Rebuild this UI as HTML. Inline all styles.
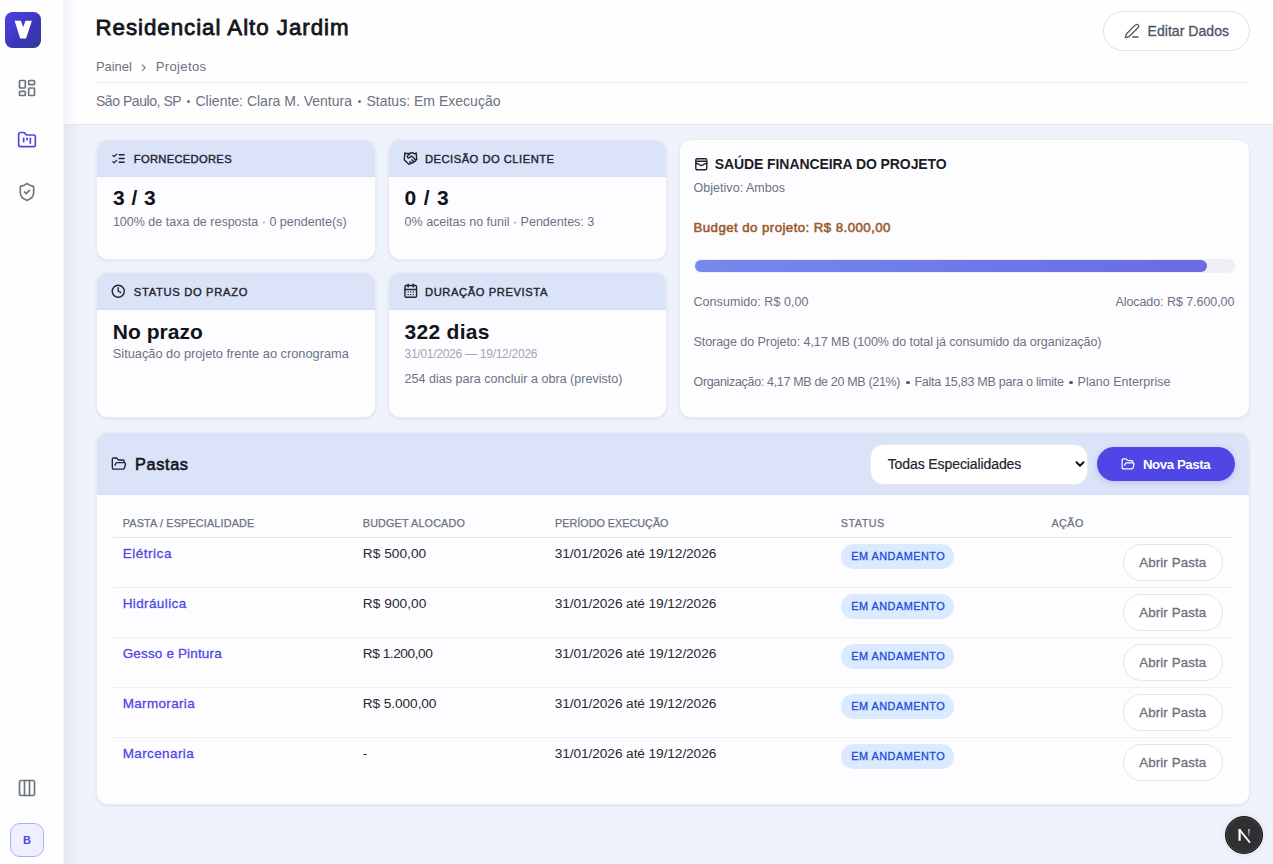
<!DOCTYPE html>
<html><head><meta charset="utf-8">
<style>
html,body{margin:0;padding:0;}
body{width:1273px;height:864px;overflow:hidden;position:relative;background:#eef2fb;font-family:"Liberation Sans",sans-serif;}
.a{position:absolute;box-sizing:border-box;}
.t{position:absolute;white-space:pre;line-height:1;}
svg{position:absolute;overflow:visible;}
.ic{fill:none;stroke-linecap:round;stroke-linejoin:round;}
.card{border:1px solid #eeebec;border-radius:12px;background:#fdfdff;overflow:hidden;box-shadow:0 1px 3px rgba(20,30,70,.05),0 1px 2px rgba(20,30,70,.03);}
.hd{position:absolute;left:0;top:0;width:100%;box-sizing:border-box;background:#dbe3f8;border-bottom:1px solid #d6def6;}
</style></head><body>
<!-- sidebar -->
<div class="a" style="left:0;top:0;width:64px;height:864px;background:#fefefe;border-right:1px solid #f2f2f4;"></div>
<div class="a" style="left:5.4px;top:12.2px;width:35.2px;height:35.6px;border-radius:7.5px;background:linear-gradient(135deg,#4d43e6 0%,#3b36b8 60%,#2f3a95 100%);"></div>
<svg style="left:0;top:0" width="64" height="64" viewBox="0 0 64 64"><path d="M14.6 20.8 H20.9 L23.2 27.2 L25.4 20.8 H31.9 L26 38.5 H20.2 Z" fill="#fff"/></svg>
<svg class="ic" style="left:17px;top:78px" width="20" height="20" viewBox="0 0 24 24" stroke="#6b7280" stroke-width="2"><rect width="7" height="9" x="3" y="3" rx="1"/><rect width="7" height="5" x="14" y="3" rx="1"/><rect width="7" height="9" x="14" y="12" rx="1"/><rect width="7" height="5" x="3" y="16" rx="1"/></svg>
<svg class="ic" style="left:17.2px;top:129.9px" width="20" height="20" viewBox="0 0 24 24" stroke="#4f46e5" stroke-width="2"><path d="M4 20h16a2 2 0 0 0 2-2V8a2 2 0 0 0-2-2h-7.93a2 2 0 0 1-1.66-.9l-.82-1.2A2 2 0 0 0 7.93 3H4a2 2 0 0 0-2 2v13c0 1.1.9 2 2 2Z"/><path d="M8 10v4"/><path d="M12 10v2"/><path d="M16 10v6"/></svg>
<svg class="ic" style="left:17px;top:182px" width="20" height="20" viewBox="0 0 24 24" stroke="#6b7280" stroke-width="2"><path d="M20 13c0 5-3.5 7.5-7.66 8.95a1 1 0 0 1-.67-.01C7.5 20.5 4 18 4 13V6a1 1 0 0 1 1-1c2 0 4.5-1.2 6.24-2.72a1.17 1.17 0 0 1 1.52 0C14.51 3.81 17 5 19 5a1 1 0 0 1 1 1z"/><path d="m9 12 2 2 4-4"/></svg>
<svg class="ic" style="left:17px;top:778px" width="20" height="20" viewBox="0 0 24 24" stroke="#6b7280" stroke-width="2"><rect width="18" height="18" x="3" y="3" rx="2"/><path d="M9 3v18"/><path d="M15 3v18"/></svg>
<div class="a" style="left:10px;top:823px;width:34px;height:34px;border-radius:10px;background:#eef1fd;border:1px solid #a9b1f5;"></div>
<div class="t" style="left:23px;top:835px;font-size:11px;font-weight:700;color:#4f46e5;">B</div>

<!-- header -->
<div class="a" style="left:64px;top:0;width:1209px;height:125px;background:#fefefe;border-bottom:1px solid #e6e7ea;"></div>
<div class="a" style="left:64px;top:0;width:14px;height:124px;background:linear-gradient(90deg,rgba(200,212,235,.22),rgba(200,212,235,0));"></div>
<div class="a" style="left:96px;top:82px;width:1153px;height:1px;background:#eceef2;"></div>
<svg class="ic" style="left:138.3px;top:61.7px" width="11.5" height="11.5" viewBox="0 0 24 24" stroke="#7b8290" stroke-width="2.4"><path d="m9 18 6-6-6-6"/></svg>
<div class="a" style="left:1103px;top:11px;width:147px;height:40px;border-radius:20px;background:#fff;border:1px solid #dfe2e7;"></div>
<svg class="ic" style="left:1123.8px;top:23.2px" width="16" height="16" viewBox="0 0 24 24" stroke="#4b5563" stroke-width="1.9"><path d="M13 21h8"/><path d="M21.174 6.812a1 1 0 0 0-3.986-3.987L3.842 16.174a2 2 0 0 0-.5.83l-1.321 4.352a.5.5 0 0 0 .623.622l4.353-1.32a2 2 0 0 0 .83-.497z"/></svg>

<div class="a" style="left:64px;top:125px;width:18px;height:739px;background:linear-gradient(90deg,rgba(150,160,185,.14),rgba(150,160,185,.05) 45%,rgba(150,160,185,0));"></div>
<!-- small cards -->
<div class="a card" style="left:96px;top:139px;width:280px;height:121px;"><div class="hd" style="height:37px;"></div></div>
<div class="a card" style="left:388px;top:139px;width:279px;height:121px;"><div class="hd" style="height:37px;"></div></div>
<div class="a card" style="left:96px;top:272px;width:280px;height:146px;"><div class="hd" style="height:37px;"></div></div>
<div class="a card" style="left:388px;top:272px;width:279px;height:146px;"><div class="hd" style="height:37px;"></div></div>
<!-- big card -->
<div class="a card" style="left:679px;top:139px;width:571px;height:279px;"></div>
<div class="a" style="left:694px;top:259px;width:541px;height:14px;border-radius:7px;background:#eef0f5;"></div>
<div class="a" style="left:695px;top:260px;width:512px;height:12px;border-radius:6px;background:linear-gradient(90deg,#7589ee,#6a6ae4);"></div>

<!-- card icons -->
<svg class="ic" style="left:111px;top:150.7px" width="15" height="15" viewBox="0 0 24 24" stroke="#1f2430" stroke-width="2.2"><path d="m3 17 2 2 4-4"/><path d="m3 7 2 2 4-4"/><path d="M13 6h8"/><path d="M13 12h8"/><path d="M13 18h8"/></svg>
<svg class="ic" style="left:403.3px;top:150.8px" width="15" height="15" viewBox="0 0 24 24" stroke="#1f2430" stroke-width="2.2"><path d="m11 17 2 2a1 1 0 1 0 3-3"/><path d="m14 14 2.5 2.5a1 1 0 1 0 3-3l-3.88-3.88a3 3 0 0 0-4.24 0l-.88.88a1 1 0 1 1-3-3l2.81-2.81a5.790 5.79 0 0 1 7.06-.87l.47.28a2 2 0 0 0 1.42.25L21 4"/><path d="m21 3 1 11h-2"/><path d="M3 3 2 14l6.5 6.5a1 1 0 1 0 3-3"/><path d="M3 4h8"/></svg>
<svg class="ic" style="left:111.2px;top:283.9px" width="14.5" height="14.5" viewBox="0 0 24 24" stroke="#1f2430" stroke-width="2.3"><circle cx="12" cy="12" r="10"/><path d="M12 6v6l4 2"/></svg>
<svg class="ic" style="left:402.7px;top:283.4px" width="15.5" height="15.5" viewBox="0 0 24 24" stroke="#1f2430" stroke-width="2.2"><path d="M8 2v4"/><path d="M16 2v4"/><rect width="18" height="18" x="3" y="4" rx="2"/><path d="M3 10h18"/><path d="M8 14h.01"/><path d="M12 14h.01"/><path d="M16 14h.01"/><path d="M8 18h.01"/><path d="M12 18h.01"/><path d="M16 18h.01"/></svg>
<svg class="ic" style="left:694px;top:156.8px" width="14.6" height="14.6" viewBox="0 0 24 24" stroke="#1f2430" stroke-width="2.3"><rect width="18" height="18" x="3" y="3" rx="2"/><path d="M3 9a2 2 0 0 1 2-2h14a2 2 0 0 1 2 2"/><path d="M3 11h3c.8 0 1.6.3 2.1.9l1.1.9c1.6 1.6 4.1 1.6 5.7 0l1.1-.9c.5-.5 1.3-.9 2.1-.9H21"/></svg>

<!-- pastas -->
<div class="a card" style="left:96px;top:432px;width:1154px;height:373px;"><div class="hd" style="height:62px;"></div></div>
<svg class="ic" style="left:111px;top:456.1px" width="15.8" height="15.8" viewBox="0 0 24 24" stroke="#1f2430" stroke-width="2.1"><path d="m6 14 1.5-2.900A2 2 0 0 1 9.24 10H20a2 2 0 0 1 1.94 2.5l-1.54 6a2 2 0 0 1-1.95 1.5H4a2 2 0 0 1-2-2V5a2 2 0 0 1 2-2h3.9a2 2 0 0 1 1.69.9l.81 1.2a2 2 0 0 0 1.67.9H18a2 2 0 0 1 2 2v2"/></svg>
<div class="a" style="left:869.5px;top:443.5px;width:218.5px;height:41px;border-radius:13px;background:#fff;border:1px solid #ebe8ea;"></div>
<svg class="ic" style="left:1072.8px;top:456.8px" width="14" height="14" viewBox="0 0 24 24" stroke="#111" stroke-width="3.3"><path d="m6 9 6 6 6-6"/></svg>
<div class="a" style="left:1097px;top:447px;width:138px;height:34px;border-radius:17px;background:#4f46e5;box-shadow:0 2px 6px rgba(79,70,229,.22);"></div>
<svg class="ic" style="left:1120.7px;top:456.7px" width="14.2" height="14.2" viewBox="0 0 24 24" stroke="#fff" stroke-width="2.1"><path d="m6 14 1.5-2.900A2 2 0 0 1 9.24 10H20a2 2 0 0 1 1.94 2.5l-1.54 6a2 2 0 0 1-1.950 1.5H4a2 2 0 0 1-2-2V5a2 2 0 0 1 2-2h3.9a2 2 0 0 1 1.69.9l.81 1.2a2 2 0 0 0 1.67.9H18a2 2 0 0 1 2 2v2"/></svg>

<!-- table lines -->
<div class="a" style="left:113px;top:537px;width:1120px;height:1px;background:#e4e6eb;"></div>
<div class="a" style="left:113px;top:587px;width:1120px;height:1px;background:#eef0f3;"></div>
<div class="a" style="left:113px;top:637px;width:1120px;height:1px;background:#eef0f3;"></div>
<div class="a" style="left:113px;top:687px;width:1120px;height:1px;background:#eef0f3;"></div>
<div class="a" style="left:113px;top:737px;width:1120px;height:1px;background:#eef0f3;"></div>
<!-- badges & buttons -->
<div class="a" style="left:841px;top:544px;width:113px;height:25px;border-radius:13px;background:#dbeafe;"></div>
<div class="a" style="left:841px;top:594px;width:113px;height:25px;border-radius:13px;background:#dbeafe;"></div>
<div class="a" style="left:841px;top:644px;width:113px;height:25px;border-radius:13px;background:#dbeafe;"></div>
<div class="a" style="left:841px;top:694px;width:113px;height:25px;border-radius:13px;background:#dbeafe;"></div>
<div class="a" style="left:841px;top:744px;width:113px;height:25px;border-radius:13px;background:#dbeafe;"></div>
<div class="a" style="left:1123px;top:544px;width:100px;height:37px;border-radius:19px;background:#fff;border:1px solid #e3e5ea;"></div>
<div class="a" style="left:1123px;top:594px;width:100px;height:37px;border-radius:19px;background:#fff;border:1px solid #e3e5ea;"></div>
<div class="a" style="left:1123px;top:644px;width:100px;height:37px;border-radius:19px;background:#fff;border:1px solid #e3e5ea;"></div>
<div class="a" style="left:1123px;top:694px;width:100px;height:37px;border-radius:19px;background:#fff;border:1px solid #e3e5ea;"></div>
<div class="a" style="left:1123px;top:744px;width:100px;height:37px;border-radius:19px;background:#fff;border:1px solid #e3e5ea;"></div>

<!-- next badge -->
<div class="a" style="left:1225px;top:816px;width:38px;height:38px;border-radius:19px;background:#303033;border:1px solid #161618;box-shadow:0 0 6px rgba(0,0,0,.08),inset 0 0 0 1px rgba(255,255,255,.1);"></div>
<svg style="left:1237.5px;top:829px" width="14" height="15" viewBox="0 0 14 15"><defs><linearGradient id="ng" gradientUnits="userSpaceOnUse" x1="0" y1="0" x2="0" y2="7.4"><stop offset="0" stop-color="#fff"/><stop offset="1" stop-color="#fff" stop-opacity="0.2"/></linearGradient></defs><path d="M1.6 0 V11.8" stroke="#fff" stroke-width="2.2" fill="none"/><path d="M1.2 0.4 L12 13.6" stroke="#fff" stroke-width="1.7" fill="none"/><path d="M10.9 0 V7.4" stroke="url(#ng)" stroke-width="1.2" fill="none"/></svg>

<div class="a" style="left:186.5px;top:99.5px;width:3.2px;height:3.2px;border-radius:2px;background:#6b7280;"></div>
<div class="a" style="left:357.6px;top:99.5px;width:3.2px;height:3.2px;border-radius:2px;background:#6b7280;"></div>
<div class="a" style="left:906.4px;top:380.5px;width:3.4px;height:3.4px;border-radius:2px;background:#555c68;"></div>
<div class="a" style="left:1069.4px;top:380.5px;width:3.4px;height:3.4px;border-radius:2px;background:#555c68;"></div>
<div class="t" style="top:17.12px;font-size:22.3px;font-weight:400;color:#14161c;letter-spacing:0.966px;left:95.50px;-webkit-text-stroke:0.8px #14161c;">Residencial Alto Jardim</div>
<div class="t" style="top:59.99px;font-size:13px;font-weight:400;color:#6b7280;letter-spacing:-0.028px;left:95.90px;">Painel</div>
<div class="t" style="top:59.99px;font-size:13px;font-weight:400;color:#6b7280;letter-spacing:0.385px;left:155.70px;">Projetos</div>
<div class="t" style="top:94.15px;font-size:14px;font-weight:400;color:#6b7280;letter-spacing:-0.439px;left:95.90px;">São Paulo, SP</div>
<div class="t" style="top:94.15px;font-size:14px;font-weight:400;color:#6b7280;letter-spacing:0.004px;left:195.50px;">Cliente: Clara M. Ventura</div>
<div class="t" style="top:94.15px;font-size:14px;font-weight:400;color:#6b7280;letter-spacing:0.014px;left:366.40px;">Status: Em Execução</div>
<div class="t" style="top:24.15px;font-size:14px;font-weight:400;color:#4b5563;letter-spacing:0.051px;left:1147.50px;-webkit-text-stroke:0.3px #4b5563;">Editar Dados</div>
<div class="t" style="top:153.52px;font-size:11.2px;font-weight:400;color:#1f2430;letter-spacing:0.301px;left:133.80px;-webkit-text-stroke:0.4px #1f2430;">FORNECEDORES</div>
<div class="t" style="top:153.52px;font-size:11.2px;font-weight:400;color:#1f2430;letter-spacing:0.494px;left:425.00px;-webkit-text-stroke:0.4px #1f2430;">DECISÃO DO CLIENTE</div>
<div class="t" style="top:286.52px;font-size:11.2px;font-weight:400;color:#1f2430;letter-spacing:0.685px;left:133.80px;-webkit-text-stroke:0.4px #1f2430;">STATUS DO PRAZO</div>
<div class="t" style="top:286.52px;font-size:11.2px;font-weight:400;color:#1f2430;letter-spacing:0.589px;left:425.00px;-webkit-text-stroke:0.4px #1f2430;">DURAÇÃO PREVISTA</div>
<div class="t" style="top:187.42px;font-size:21px;font-weight:700;color:#111318;letter-spacing:0.456px;left:113.10px;">3 / 3</div>
<div class="t" style="top:215.82px;font-size:12.5px;font-weight:400;color:#6b7280;letter-spacing:0.006px;left:112.90px;">100% de taxa de resposta · 0 pendente(s)</div>
<div class="t" style="top:187.42px;font-size:21px;font-weight:700;color:#111318;letter-spacing:0.781px;left:404.60px;">0 / 3</div>
<div class="t" style="top:215.82px;font-size:12.5px;font-weight:400;color:#6b7280;letter-spacing:-0.001px;left:404.60px;">0% aceitas no funil · Pendentes: 3</div>
<div class="t" style="top:320.82px;font-size:21px;font-weight:700;color:#111318;letter-spacing:0.022px;left:112.80px;">No prazo</div>
<div class="t" style="top:347.56px;font-size:12.8px;font-weight:400;color:#6b7280;letter-spacing:-0.005px;left:112.80px;">Situação do projeto frente ao cronograma</div>
<div class="t" style="top:321.02px;font-size:21px;font-weight:700;color:#111318;letter-spacing:0.299px;left:404.50px;">322 dias</div>
<div class="t" style="top:347.74px;font-size:12px;font-weight:400;color:#a0a5b0;letter-spacing:-0.263px;left:404.50px;">31/01/2026 — 19/12/2026</div>
<div class="t" style="top:373.22px;font-size:12.5px;font-weight:400;color:#6b7280;letter-spacing:0.031px;left:404.50px;">254 dias para concluir a obra (previsto)</div>
<div class="t" style="top:157.45px;font-size:14px;font-weight:700;color:#1a1d24;letter-spacing:-0.082px;left:714.70px;">SAÚDE FINANCEIRA DO PROJETO</div>
<div class="t" style="top:181.82px;font-size:12.5px;font-weight:400;color:#6b7280;letter-spacing:0.035px;left:693.50px;">Objetivo: Ambos</div>
<div class="t" style="top:220.74px;font-size:13.3px;font-weight:400;color:#9a5a2c;letter-spacing:0.42px;left:693.50px;-webkit-text-stroke:0.55px #9a5a2c;">Budget do projeto: R$ 8.000,00</div>
<div class="t" style="top:296.42px;font-size:12.5px;font-weight:400;color:#6b7280;letter-spacing:0.062px;left:693.50px;">Consumido: R$ 0,00</div>
<div class="t" style="top:296.42px;font-size:12.5px;font-weight:400;color:#6b7280;letter-spacing:-0.065px;right:38.66px;">Alocado: R$ 7.600,00</div>
<div class="t" style="top:335.62px;font-size:12.5px;font-weight:400;color:#6b7280;letter-spacing:-0.058px;left:693.50px;">Storage do Projeto: 4,17 MB (100% do total já consumido da organização)</div>
<div class="t" style="top:375.62px;font-size:12.5px;font-weight:400;color:#6b7280;letter-spacing:-0.329px;left:693.50px;">Organização: 4,17 MB de 20 MB (21%)</div>
<div class="t" style="top:375.62px;font-size:12.5px;font-weight:400;color:#6b7280;letter-spacing:-0.253px;left:914.40px;">Falta 15,83 MB para o limite</div>
<div class="t" style="top:375.62px;font-size:12.5px;font-weight:400;color:#6b7280;letter-spacing:0.039px;left:1077.50px;">Plano Enterprise</div>
<div class="t" style="top:456.20px;font-size:16.3px;font-weight:400;color:#14161c;letter-spacing:0.644px;left:135.00px;-webkit-text-stroke:0.6px #14161c;">Pastas</div>
<div class="t" style="top:457.45px;font-size:14px;font-weight:400;color:#1f2430;letter-spacing:-0.096px;left:887.70px;-webkit-text-stroke:0.2px #1f2430;">Todas Especialidades</div>
<div class="t" style="top:458.04px;font-size:13.3px;font-weight:700;color:#ffffff;letter-spacing:-0.434px;left:1142.90px;">Nova Pasta</div>
<div class="t" style="top:518.36px;font-size:10.8px;font-weight:400;color:#6b7280;letter-spacing:0.169px;left:122.80px;-webkit-text-stroke:0.25px #6b7280;">PASTA / ESPECIALIDADE</div>
<div class="t" style="top:518.36px;font-size:10.8px;font-weight:400;color:#6b7280;letter-spacing:0.154px;left:362.80px;-webkit-text-stroke:0.25px #6b7280;">BUDGET ALOCADO</div>
<div class="t" style="top:518.36px;font-size:10.8px;font-weight:400;color:#6b7280;letter-spacing:0.007px;left:555.00px;-webkit-text-stroke:0.25px #6b7280;">PERÍODO EXECUÇÃO</div>
<div class="t" style="top:518.36px;font-size:10.8px;font-weight:400;color:#6b7280;letter-spacing:0.52px;left:840.70px;-webkit-text-stroke:0.25px #6b7280;">STATUS</div>
<div class="t" style="top:518.36px;font-size:10.8px;font-weight:400;color:#6b7280;letter-spacing:0.397px;left:1051.50px;-webkit-text-stroke:0.25px #6b7280;">AÇÃO</div>
<div class="t" style="top:546.87px;font-size:13.5px;font-weight:400;color:#4f46e5;letter-spacing:0.526px;left:122.70px;-webkit-text-stroke:0.28px #4f46e5;">Elétrica</div>
<div class="t" style="top:546.70px;font-size:13.7px;font-weight:400;color:#262a33;letter-spacing:0.029px;left:362.80px;">R$ 500,00</div>
<div class="t" style="top:546.70px;font-size:13.7px;font-weight:400;color:#262a33;letter-spacing:-0.09px;left:554.80px;">31/01/2026 até 19/12/2026</div>
<div class="t" style="top:550.67px;font-size:10.9px;font-weight:400;color:#1d4ed8;letter-spacing:0.477px;left:851.30px;-webkit-text-stroke:0.3px #1d4ed8;">EM ANDAMENTO</div>
<div class="t" style="top:555.94px;font-size:13.3px;font-weight:400;color:#6b7280;letter-spacing:0.122px;left:1139.20px;-webkit-text-stroke:0.3px #6b7280;">Abrir Pasta</div>
<div class="t" style="top:596.87px;font-size:13.5px;font-weight:400;color:#4f46e5;letter-spacing:0.385px;left:122.70px;-webkit-text-stroke:0.28px #4f46e5;">Hidráulica</div>
<div class="t" style="top:596.70px;font-size:13.7px;font-weight:400;color:#262a33;letter-spacing:0.054px;left:362.80px;">R$ 900,00</div>
<div class="t" style="top:596.70px;font-size:13.7px;font-weight:400;color:#262a33;letter-spacing:-0.09px;left:554.80px;">31/01/2026 até 19/12/2026</div>
<div class="t" style="top:600.67px;font-size:10.9px;font-weight:400;color:#1d4ed8;letter-spacing:0.477px;left:851.30px;-webkit-text-stroke:0.3px #1d4ed8;">EM ANDAMENTO</div>
<div class="t" style="top:605.94px;font-size:13.3px;font-weight:400;color:#6b7280;letter-spacing:0.122px;left:1139.20px;-webkit-text-stroke:0.3px #6b7280;">Abrir Pasta</div>
<div class="t" style="top:646.87px;font-size:13.5px;font-weight:400;color:#4f46e5;letter-spacing:0.156px;left:122.70px;-webkit-text-stroke:0.28px #4f46e5;">Gesso e Pintura</div>
<div class="t" style="top:646.70px;font-size:13.7px;font-weight:400;color:#262a33;letter-spacing:-0.459px;left:362.80px;">R$ 1.200,00</div>
<div class="t" style="top:646.70px;font-size:13.7px;font-weight:400;color:#262a33;letter-spacing:-0.09px;left:554.80px;">31/01/2026 até 19/12/2026</div>
<div class="t" style="top:650.67px;font-size:10.9px;font-weight:400;color:#1d4ed8;letter-spacing:0.477px;left:851.30px;-webkit-text-stroke:0.3px #1d4ed8;">EM ANDAMENTO</div>
<div class="t" style="top:655.94px;font-size:13.3px;font-weight:400;color:#6b7280;letter-spacing:0.122px;left:1139.20px;-webkit-text-stroke:0.3px #6b7280;">Abrir Pasta</div>
<div class="t" style="top:696.87px;font-size:13.5px;font-weight:400;color:#4f46e5;letter-spacing:0.332px;left:122.70px;-webkit-text-stroke:0.28px #4f46e5;">Marmoraria</div>
<div class="t" style="top:696.70px;font-size:13.7px;font-weight:400;color:#262a33;letter-spacing:-0.089px;left:362.80px;">R$ 5.000,00</div>
<div class="t" style="top:696.70px;font-size:13.7px;font-weight:400;color:#262a33;letter-spacing:-0.09px;left:554.80px;">31/01/2026 até 19/12/2026</div>
<div class="t" style="top:700.67px;font-size:10.9px;font-weight:400;color:#1d4ed8;letter-spacing:0.477px;left:851.30px;-webkit-text-stroke:0.3px #1d4ed8;">EM ANDAMENTO</div>
<div class="t" style="top:705.94px;font-size:13.3px;font-weight:400;color:#6b7280;letter-spacing:0.122px;left:1139.20px;-webkit-text-stroke:0.3px #6b7280;">Abrir Pasta</div>
<div class="t" style="top:746.87px;font-size:13.5px;font-weight:400;color:#4f46e5;letter-spacing:0.385px;left:122.70px;-webkit-text-stroke:0.28px #4f46e5;">Marcenaria</div>
<div class="t" style="top:746.70px;font-size:13.7px;font-weight:400;color:#262a33;letter-spacing:0px;left:362.80px;">-</div>
<div class="t" style="top:746.70px;font-size:13.7px;font-weight:400;color:#262a33;letter-spacing:-0.09px;left:554.80px;">31/01/2026 até 19/12/2026</div>
<div class="t" style="top:750.67px;font-size:10.9px;font-weight:400;color:#1d4ed8;letter-spacing:0.477px;left:851.30px;-webkit-text-stroke:0.3px #1d4ed8;">EM ANDAMENTO</div>
<div class="t" style="top:755.94px;font-size:13.3px;font-weight:400;color:#6b7280;letter-spacing:0.122px;left:1139.20px;-webkit-text-stroke:0.3px #6b7280;">Abrir Pasta</div>
</body></html>
